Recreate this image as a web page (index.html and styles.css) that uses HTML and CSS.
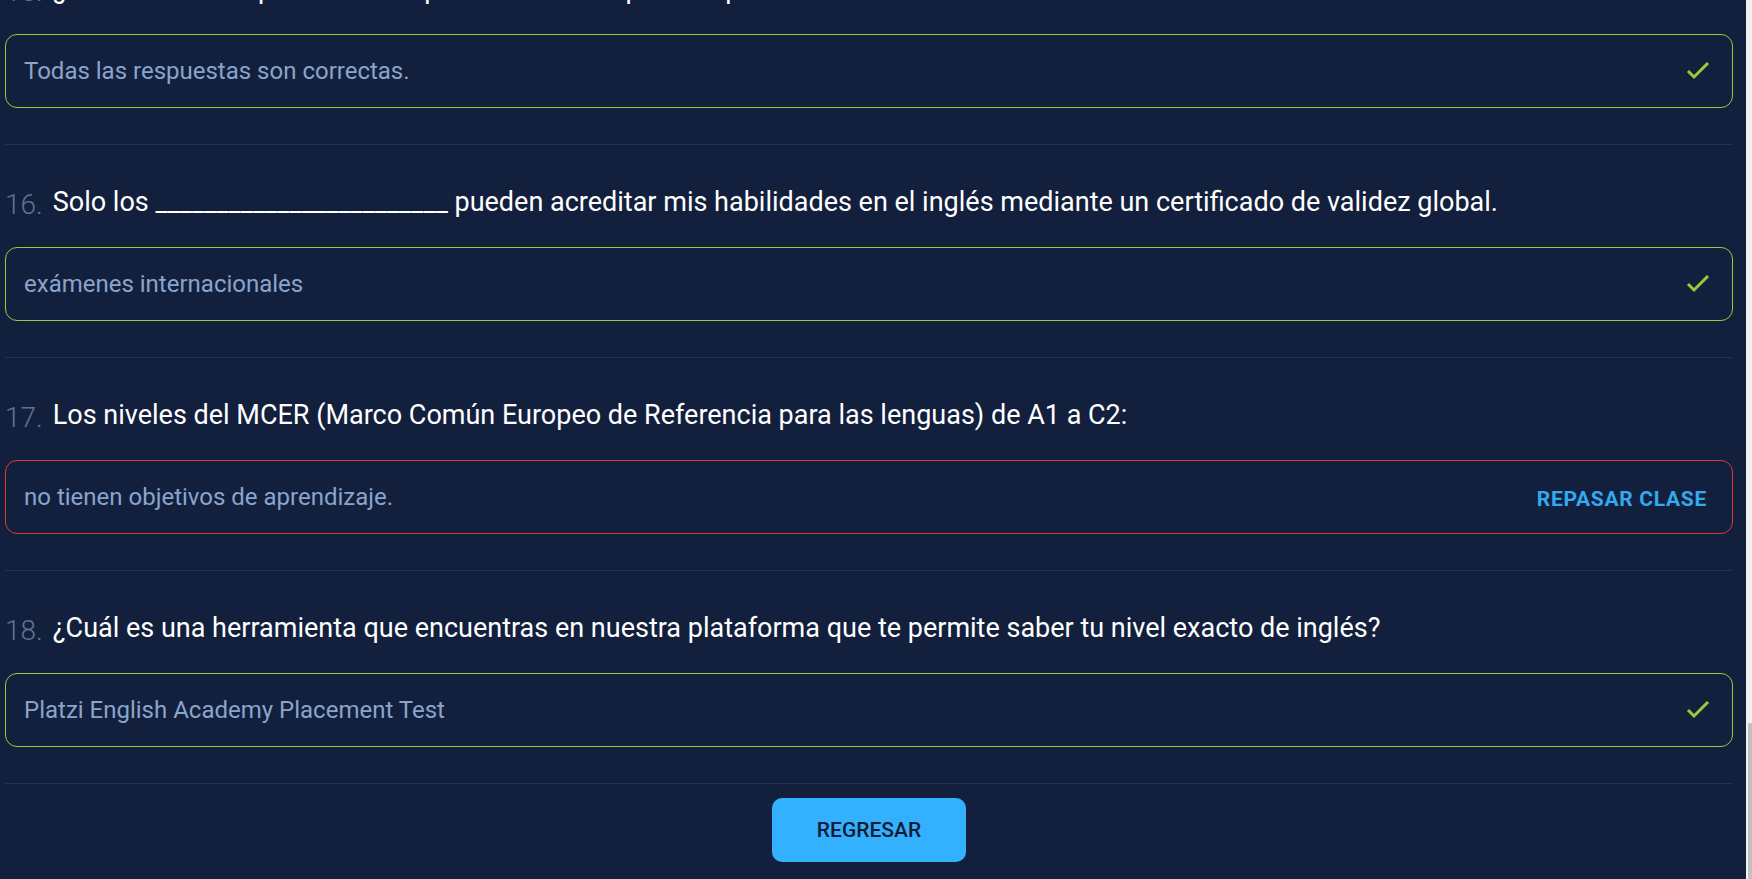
FILE: index.html
```html
<!DOCTYPE html>
<html lang="es">
<head>
<meta charset="utf-8">
<title>Resultados</title>
<link rel="stylesheet" href="styles.css">
</head>
<body>
<div class="page">
  <main class="quiz">
    <section class="item">
      <h2 class="question"><span class="num">15.</span><span class="qtext">¿Cuál es la clave para dominar pronto el idioma por completo?</span></h2>
      <div class="answer answer--ok">
        <span class="atext">Todas las respuestas son correctas.</span>
        <svg class="check" viewBox="0 0 24 18" width="24" height="18"><polyline points="2,9 8,15 22,1"/></svg>
      </div>
    </section>
    <section class="item">
      <h2 class="question"><span class="num">16.</span><span class="qtext">Solo los ________________________ pueden acreditar mis habilidades en el inglés mediante un certificado de validez global.</span></h2>
      <div class="answer answer--ok">
        <span class="atext">exámenes internacionales</span>
        <svg class="check" viewBox="0 0 24 18" width="24" height="18"><polyline points="2,9 8,15 22,1"/></svg>
      </div>
    </section>
    <section class="item">
      <h2 class="question"><span class="num">17.</span><span class="qtext">Los niveles del MCER (Marco Común Europeo de Referencia para las lenguas) de A1 a C2:</span></h2>
      <div class="answer answer--bad">
        <span class="atext">no tienen objetivos de aprendizaje.</span>
        <a class="review" href="#">REPASAR CLASE</a>
      </div>
    </section>
    <section class="item">
      <h2 class="question"><span class="num">18.</span><span class="qtext">¿Cuál es una herramienta que encuentras en nuestra plataforma que te permite saber tu nivel exacto de inglés?</span></h2>
      <div class="answer answer--ok">
        <span class="atext">Platzi English Academy Placement Test</span>
        <svg class="check" viewBox="0 0 24 18" width="24" height="18"><polyline points="2,9 8,15 22,1"/></svg>
      </div>
    </section>
    <div class="actions">
      <button class="btn" type="button">REGRESAR</button>
    </div>
  </main>
  <div class="scrollbar"><div class="thumb"></div></div>
</div>
</body>
</html>
```

FILE: styles.css
```css
* { box-sizing: border-box; }

html, body {
  margin: 0;
  height: 879px;
  overflow: hidden;
  background: #13203d;
  font-family: Roboto, "Liberation Sans", Arial, sans-serif;
}

.page {
  display: flex;
  height: 879px;
}

.quiz {
  flex: 1;
  padding: 0 13px 0 5px;
  margin-top: -68px;
}

.item {
  padding: 39px 0 36px;
  border-bottom: 1px solid #223253;
}

.question {
  display: flex;
  align-items: flex-end;
  gap: 10px;
  margin: 0 0 27px;
  font-weight: 400;
  height: 36px;
}

.num {
  font-size: 28px;
  line-height: 31px;
  font-weight: 300;
  color: #5d7398;
}

.qtext {
  font-size: 27px;
  line-height: 36px;
  color: #ffffff;
  white-space: nowrap;
}

.answer {
  height: 74px;
  border: 1px solid #9cc93c;
  border-radius: 12px;
  display: flex;
  align-items: center;
  justify-content: space-between;
  padding: 0 22px 0 18px;
}

.answer--bad {
  border-color: #e2383d;
}

.atext {
  font-size: 24px;
  color: #8aa4cc;
}

.check {
  display: block;
  fill: none;
  stroke: #9cc93c;
  stroke-width: 3;
}

.review {
  font-size: 21px;
  font-weight: 700;
  color: #33a9ef;
  text-decoration: none;
  letter-spacing: 0.7px;
  margin: 4px 3px 0 0;
}

.actions {
  display: flex;
  justify-content: center;
  padding-top: 14px;
}

.btn {
  width: 194px;
  height: 64px;
  border: 0;
  border-radius: 10px;
  background: #33b1ff;
  color: #101b36;
  font-family: Roboto, "Liberation Sans", Arial, sans-serif;
  font-size: 21px;
  font-weight: 500;
}

.scrollbar {
  width: 6px;
  flex: none;
  background: #f1f1f1;
  display: flex;
  flex-direction: column;
  justify-content: flex-end;
  align-items: flex-end;
}

.thumb {
  width: 4px;
  height: 156px;
  background: #c1c1c1;
}
```
